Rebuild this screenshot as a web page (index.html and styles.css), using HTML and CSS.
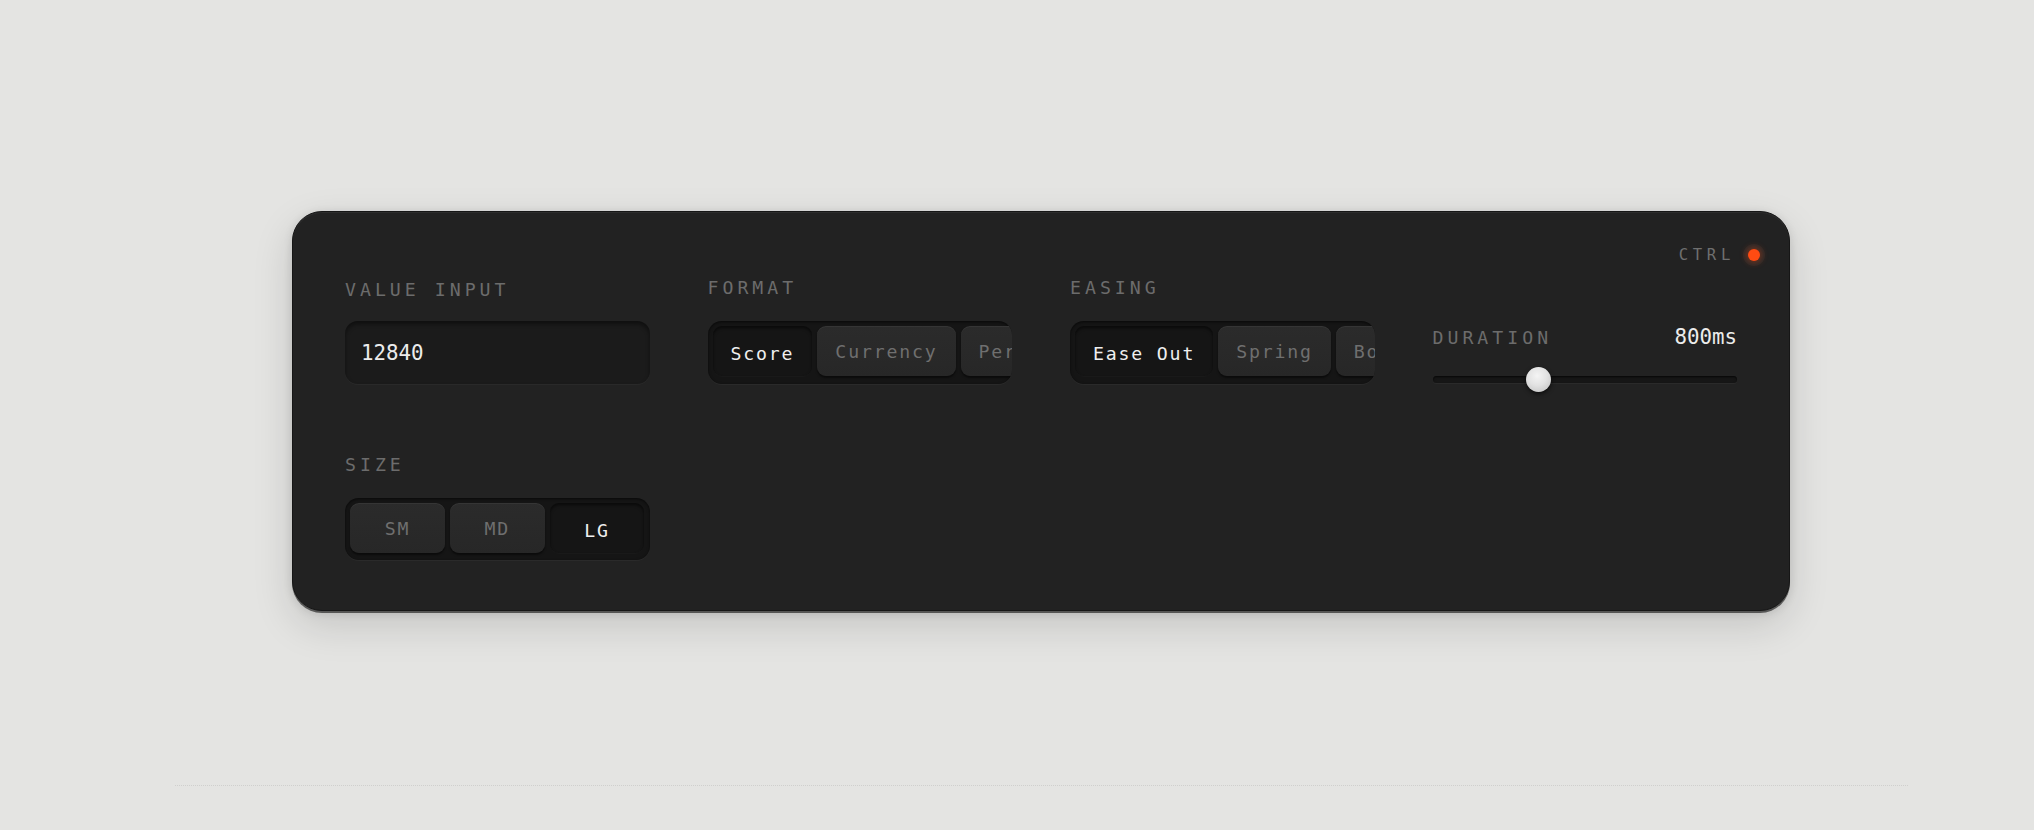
FILE: index.html
```html
<!DOCTYPE html>
<html lang="en">
<head>
<meta charset="utf-8">
<title>Control Panel</title>
<link rel="stylesheet" href="styles.css">
</head>
<body>
<div class="page">
  <section class="panel">
    <div class="badge"><span class="badge-text">CTRL</span><span class="led"></span></div>
    <div class="grid">
      <div class="field">
        <div class="label label-input">VALUE INPUT</div>
        <div class="input">12840</div>
      </div>
      <div class="field">
        <div class="label">FORMAT</div>
        <div class="seg">
          <div class="btn active">Score</div>
          <div class="btn">Currency</div>
          <div class="btn">Percent</div>
        </div>
      </div>
      <div class="field">
        <div class="label">EASING</div>
        <div class="seg">
          <div class="btn active">Ease Out</div>
          <div class="btn">Spring</div>
          <div class="btn">Bounce</div>
        </div>
      </div>
      <div class="field duration">
        <div class="dur-head">
          <div class="label">DURATION</div>
          <div class="dur-value">800ms</div>
        </div>
        <div class="slider">
          <div class="track"></div>
          <div class="knob" style="left: 34.8%"></div>
        </div>
      </div>
      <div class="field">
        <div class="label label-size">SIZE</div>
        <div class="seg seg-size">
          <div class="btn">SM</div>
          <div class="btn">MD</div>
          <div class="btn active">LG</div>
        </div>
      </div>
    </div>
  </section>
  <div class="rule"></div>
</div>
</body>
</html>
```
FILE: styles.css
```css
* { box-sizing: border-box; }
html, body { margin: 0; padding: 0; }
body {
  background: #e4e4e2;
  font-family: "DejaVu Sans Mono", monospace;
}
.page {
  padding: 211px 0 0 48px;
  display: flex;
  flex-direction: column;
  align-items: center;
}
.panel {
  position: relative;
  width: 1498px;
  padding: 65px 52px 50px;
  background: #222222;
  border: 1px solid #161616;
  border-radius: 30px;
  box-shadow:
    inset 0 1px 0 rgba(255,255,255,0.05),
    0 2px 0 rgba(0,0,0,0.55),
    0 14px 40px rgba(0,0,0,0.14),
    0 2px 10px rgba(0,0,0,0.12);
}
.badge {
  position: absolute;
  top: 34px;
  right: 29px;
  display: flex;
  align-items: center;
}
.badge-text {
  font-size: 15.6px;
  letter-spacing: 0.3em;
  color: #6f6f6f;
}
.led {
  width: 12px;
  height: 12px;
  margin-left: 13px;
  border-radius: 50%;
  background: #ff4b12;
  box-shadow: 0 0 6px 2px rgba(255,75,18,0.35), 0 0 0 5px rgba(255,255,255,0.03);
}
.grid {
  display: grid;
  grid-template-columns: repeat(4, minmax(0, 1fr));
  column-gap: 58px;
  row-gap: 70px;
  align-items: start;
}
.field { min-width: 0; }
.label {
  font-size: 18.2px;
  line-height: 21px;
  letter-spacing: 0.22em;
  color: #6c6c6c;
  margin-bottom: 23px;
  white-space: nowrap;
}
.label-input { padding-top: 2px; margin-bottom: 21px; }
.input {
  height: 63px;
  border-radius: 13px;
  background: #1b1b1b;
  box-shadow: inset 0 3px 4px rgba(0,0,0,0.45), 0 1px 0 rgba(255,255,255,0.035);
  display: flex;
  align-items: center;
  padding: 0 16px;
  font-size: 20.8px;
  color: #ececec;
}
.seg {
  height: 63px;
  padding: 5px;
  display: flex;
  gap: 5px;
  overflow: hidden;
  border-radius: 14px;
  background: #151515;
  box-shadow: inset 0 1px 3px rgba(0,0,0,0.6), 0 1px 0 rgba(255,255,255,0.04);
}
.seg-size { height: 62px; }
.btn {
  flex-shrink: 0;
  height: 50px;
  padding: 0 18px;
  display: flex;
  align-items: center;
  justify-content: center;
  border-radius: 9px;
  background: linear-gradient(#2b2b2b, #272727);
  box-shadow: inset 0 1px 0 rgba(255,255,255,0.05), 0 2px 2px rgba(0,0,0,0.5);
  font-size: 18.2px;
  letter-spacing: 0.1em;
  color: #6f6f6f;
  white-space: nowrap;
}
.btn.active {
  background: #151515;
  box-shadow: inset 0 2px 3px rgba(0,0,0,0.55), 0 1px 0 rgba(255,255,255,0.02);
  color: #efefef;
  padding-top: 4px;
}
.seg-size .btn {
  flex: 1 1 0;
  padding-left: 0;
  padding-right: 0;
}
.seg-size .btn.active { padding-top: 4px; }
.duration { padding-top: 48px; }
.dur-head {
  display: flex;
  justify-content: space-between;
  align-items: baseline;
}
.dur-head .label { margin-bottom: 0; }
.dur-value {
  font-size: 20.8px;
  color: #ececec;
}
.slider {
  position: relative;
  margin-top: 27px;
  height: 7px;
}
.track {
  width: 100%;
  height: 7px;
  border-radius: 4px;
  background: #161616;
  box-shadow: inset 0 1px 2px rgba(0,0,0,0.7), 0 1px 0 rgba(255,255,255,0.04);
}
.knob {
  position: absolute;
  top: -9px;
  width: 25px;
  height: 25px;
  margin-left: -12.5px;
  border-radius: 50%;
  background: radial-gradient(circle at 45% 35%, #f4f4f4 0%, #e2e2e2 45%, #bdbdbd 100%);
  box-shadow: 0 2px 4px rgba(0,0,0,0.6);
}
.rule {
  width: 1733px;
  margin-top: 174px;
  border-top: 1px dotted #cfcfcd;
}
```
